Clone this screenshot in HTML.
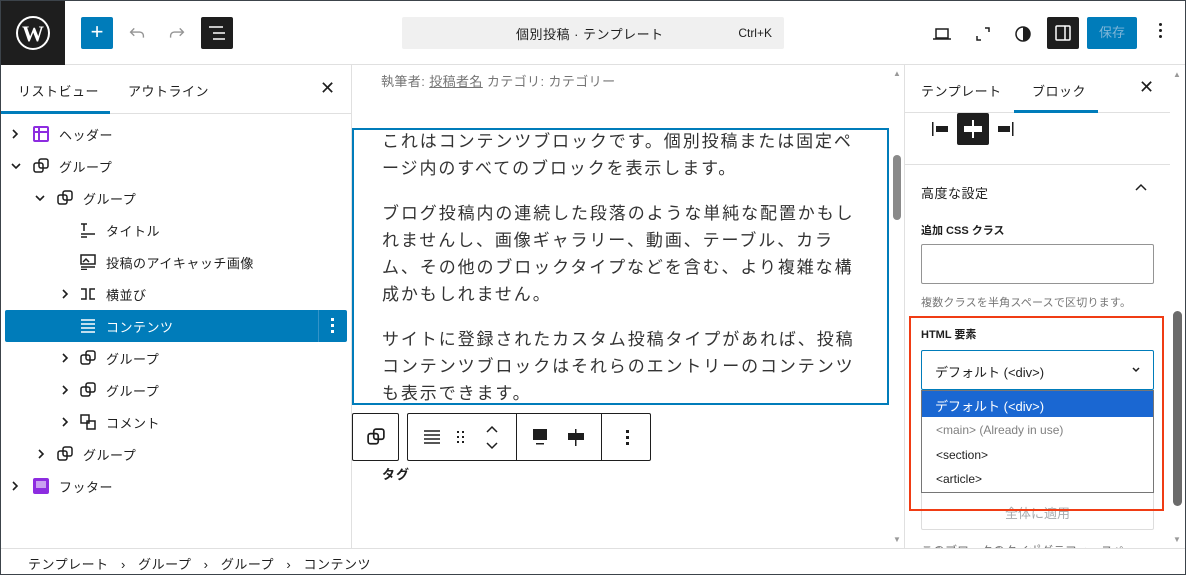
<!DOCTYPE html>
<html><head><meta charset="utf-8"><style>
*{box-sizing:border-box;margin:0;padding:0}
body{width:1186px;height:575px;overflow:hidden;background:#fff;font-family:"Liberation Sans","Noto Sans CJK JP",sans-serif;color:#1e1e1e;position:relative;font-size:13px}
.abs{position:absolute}
.frame{position:absolute;inset:0;border:1px solid #3c434a;pointer-events:none;z-index:50}
svg{display:block}
.li{position:absolute;height:32px;display:flex;align-items:center;font-size:13px;color:#1e1e1e;letter-spacing:.5px}
.chev{position:absolute}
</style></head><body>
<div class="frame"></div>
<div class="abs" style="left:0;top:0;width:1186px;height:65px;border-bottom:1px solid #e0e0e0"></div>
<div class="abs" style="left:0;top:0;width:65px;height:65px;background:#1e1e1e;display:flex;align-items:center;justify-content:center">
<svg width="36" height="36" viewBox="0 0 36 36"><circle cx="18" cy="18" r="16" fill="none" stroke="#fff" stroke-width="2"/><text x="18" y="26" text-anchor="middle" fill="#fff" font-family="Liberation Serif" font-weight="bold" font-size="22">W</text></svg></div>
<div class="abs" style="left:81px;top:17px;width:32px;height:32px;background:#007cba;border-radius:2px;color:#fff;font-size:22px;line-height:30px;text-align:center">+</div>
<svg class="abs" style="left:126px;top:22px" width="22" height="22" viewBox="0 0 24 24" fill="none" stroke="#949494" stroke-width="1.5"><path d="M9 7L5 11L9 15M5 11H15a4 4 0 0 1 4 4v2"/></svg>
<svg class="abs" style="left:166px;top:22px" width="22" height="22" viewBox="0 0 24 24" fill="none" stroke="#949494" stroke-width="1.5"><path d="M15 7L19 11L15 15M19 11H9a4 4 0 0 0-4 4v2"/></svg>
<div class="abs" style="left:201px;top:17px;width:32px;height:32px;background:#1e1e1e;border-radius:2px"><svg width="32" height="32" viewBox="0 0 32 32" stroke="#fff" stroke-width="1.5"><path d="M8 10h14M12 16h12M12 22h12"/></svg></div>
<div class="abs" style="left:402px;top:17px;width:382px;height:32px;background:#f0f0f0;border-radius:2px;font-size:13px"><span class="abs" style="left:114px;top:7px;letter-spacing:.5px">個別投稿 · テンプレート</span><span class="abs" style="right:12px;top:9px;font-size:12px">Ctrl+K</span></div>
<svg class="abs" style="left:930px;top:22px" width="24" height="24" viewBox="0 0 24 24" fill="none" stroke="#1e1e1e" stroke-width="1.5"><path d="M6 7h12v9H6zM3 17h18"/></svg>
<svg class="abs" style="left:971px;top:22px" width="24" height="24" viewBox="0 0 24 24" fill="none" stroke="#1e1e1e" stroke-width="1.5"><path d="M14 6h4v4M10 18H6v-4"/></svg>
<svg class="abs" style="left:1011px;top:22px" width="24" height="24" viewBox="0 0 24 24"><circle cx="12" cy="12" r="7" fill="none" stroke="#1e1e1e" stroke-width="1.5"/><path d="M12 5a7 7 0 0 1 0 14z" fill="#1e1e1e"/></svg>
<div class="abs" style="left:1047px;top:17px;width:32px;height:32px;background:#1e1e1e;border-radius:2px"><svg width="32" height="32" viewBox="0 0 32 32" fill="none" stroke="#fff" stroke-width="1.5"><rect x="9" y="9" width="14" height="14" rx="1"/><path d="M18 9v14"/></svg></div>
<div class="abs" style="left:1087px;top:17px;width:50px;height:32px;background:#007cba;border-radius:2px;color:#7fb6d8;font-size:13px;line-height:32px;text-align:center">保存</div>
<div class="abs" style="left:1159px;top:23px;width:3px;height:20px"><div style="width:3px;height:3px;background:#1e1e1e;border-radius:50%;margin-bottom:3px"></div><div style="width:3px;height:3px;background:#1e1e1e;border-radius:50%;margin-bottom:3px"></div><div style="width:3px;height:3px;background:#1e1e1e;border-radius:50%"></div></div>

<div class="abs" style="left:351px;top:65px;width:1px;height:484px;background:#e0e0e0"></div>
<div class="abs" style="left:0;top:113px;width:351px;height:1px;background:#e0e0e0"></div>
<div class="abs" style="left:0;top:111px;width:110px;height:3px;background:#007cba"></div>
<div class="abs" style="left:18px;top:81px;letter-spacing:.5px">リストビュー</div>
<div class="abs" style="left:128px;top:81px;letter-spacing:.5px">アウトライン</div>
<div class="abs" style="left:320px;top:78px;font-size:18px">✕</div>

<div class="li" style="left:33px;top:118px"><span style="width:16px;height:16px;border:2px solid #8d2ce0;margin-right:10px;background:linear-gradient(#8d2ce0,#8d2ce0) 0 3px/100% 2px no-repeat,linear-gradient(#8d2ce0,#8d2ce0) 3px 0/2px 100% no-repeat;border-radius:2px"></span>ヘッダー</div>
<svg class="chev" style="left:11px;top:129px" width="8" height="10" viewBox="0 0 8 10" fill="none" stroke="#1e1e1e" stroke-width="1.6"><path d="M2 1l4 4-4 4"/></svg>
<div class="li" style="left:33px;top:150px"><svg width="16" height="16" viewBox="0 0 16 16" fill="none" stroke="#1e1e1e" stroke-width="1.5" style="margin-right:10px"><rect x="1" y="5" width="9" height="9" rx="2"/><rect x="6" y="1" width="9" height="9" rx="2"/></svg>グループ</div>
<svg class="chev" style="left:11px;top:162px" width="10" height="8" viewBox="0 0 10 8" fill="none" stroke="#1e1e1e" stroke-width="1.6"><path d="M1 2l4 4 4-4"/></svg>
<div class="li" style="left:57px;top:182px"><svg width="16" height="16" viewBox="0 0 16 16" fill="none" stroke="#1e1e1e" stroke-width="1.5" style="margin-right:10px"><rect x="1" y="5" width="9" height="9" rx="2"/><rect x="6" y="1" width="9" height="9" rx="2"/></svg>グループ</div>
<svg class="chev" style="left:35px;top:194px" width="10" height="8" viewBox="0 0 10 8" fill="none" stroke="#1e1e1e" stroke-width="1.6"><path d="M1 2l4 4 4-4"/></svg>
<div class="li" style="left:80px;top:214px"><svg width="16" height="16" viewBox="0 0 16 16" fill="none" stroke="#1e1e1e" stroke-width="1.5" style="margin-right:10px"><path d="M1 2h6M4 2v7M1 12h14M1 15h6"/></svg>タイトル</div>
<div class="li" style="left:80px;top:246px"><svg width="16" height="16" viewBox="0 0 16 16" fill="none" stroke="#1e1e1e" stroke-width="1.5" style="margin-right:10px"><rect x="1" y="1" width="14" height="9"/><path d="M3 8l3-3 3 3M1 13h14M1 15.5h6"/></svg>投稿のアイキャッチ画像</div>
<div class="li" style="left:80px;top:278px"><svg width="16" height="16" viewBox="0 0 16 16" fill="none" stroke="#1e1e1e" stroke-width="1.5" style="margin-right:10px"><path d="M1 3h5v10H1M15 3h-5v10h5"/></svg>横並び</div>
<svg class="chev" style="left:61px;top:289px" width="8" height="10" viewBox="0 0 8 10" fill="none" stroke="#1e1e1e" stroke-width="1.6"><path d="M2 1l4 4-4 4"/></svg>
<div class="abs" style="left:5px;top:310px;width:342px;height:32px;background:#007cba;border-radius:2px"></div>
<div class="abs" style="left:318px;top:310px;width:1px;height:32px;background:#3393c8"></div>
<div class="abs" style="left:331px;top:318px;width:3px"><div style="width:3px;height:3px;background:#fff;margin-bottom:3px"></div><div style="width:3px;height:3px;background:#fff;margin-bottom:3px"></div><div style="width:3px;height:3px;background:#fff"></div></div>
<div class="li" style="left:80px;top:310px;color:#fff"><svg width="16" height="16" viewBox="0 0 16 16" fill="none" stroke="#fff" stroke-width="1.5" style="margin-right:10px"><path d="M1 2h14M1 6h14M1 10h14M1 14h14"/></svg>コンテンツ</div>
<div class="li" style="left:80px;top:342px"><svg width="16" height="16" viewBox="0 0 16 16" fill="none" stroke="#1e1e1e" stroke-width="1.5" style="margin-right:10px"><rect x="1" y="5" width="9" height="9" rx="2"/><rect x="6" y="1" width="9" height="9" rx="2"/></svg>グループ</div>
<svg class="chev" style="left:61px;top:353px" width="8" height="10" viewBox="0 0 8 10" fill="none" stroke="#1e1e1e" stroke-width="1.6"><path d="M2 1l4 4-4 4"/></svg>
<div class="li" style="left:80px;top:374px"><svg width="16" height="16" viewBox="0 0 16 16" fill="none" stroke="#1e1e1e" stroke-width="1.5" style="margin-right:10px"><rect x="1" y="5" width="9" height="9" rx="2"/><rect x="6" y="1" width="9" height="9" rx="2"/></svg>グループ</div>
<svg class="chev" style="left:61px;top:385px" width="8" height="10" viewBox="0 0 8 10" fill="none" stroke="#1e1e1e" stroke-width="1.6"><path d="M2 1l4 4-4 4"/></svg>
<div class="li" style="left:80px;top:406px"><svg width="16" height="16" viewBox="0 0 16 16" fill="none" stroke="#1e1e1e" stroke-width="1.5" style="margin-right:10px"><rect x="1" y="1" width="8" height="8"/><rect x="7" y="7" width="8" height="8"/></svg>コメント</div>
<svg class="chev" style="left:61px;top:417px" width="8" height="10" viewBox="0 0 8 10" fill="none" stroke="#1e1e1e" stroke-width="1.6"><path d="M2 1l4 4-4 4"/></svg>
<div class="li" style="left:57px;top:438px"><svg width="16" height="16" viewBox="0 0 16 16" fill="none" stroke="#1e1e1e" stroke-width="1.5" style="margin-right:10px"><rect x="1" y="5" width="9" height="9" rx="2"/><rect x="6" y="1" width="9" height="9" rx="2"/></svg>グループ</div>
<svg class="chev" style="left:37px;top:449px" width="8" height="10" viewBox="0 0 8 10" fill="none" stroke="#1e1e1e" stroke-width="1.6"><path d="M2 1l4 4-4 4"/></svg>
<div class="li" style="left:33px;top:470px"><span style="width:16px;height:16px;background:#8d2ce0;margin-right:10px;border-radius:2px;position:relative"><span style="position:absolute;left:3px;top:3px;width:10px;height:7px;background:#c9a0f0"></span></span>フッター</div>
<svg class="chev" style="left:11px;top:481px" width="8" height="10" viewBox="0 0 8 10" fill="none" stroke="#1e1e1e" stroke-width="1.6"><path d="M2 1l4 4-4 4"/></svg>

<div class="abs" style="left:381px;top:71px;color:#757575;font-size:13px;letter-spacing:.4px">執筆者: <u>投稿者名</u> カテゴリ: カテゴリー</div>
<div class="abs" style="left:352px;top:128px;width:537px;height:277px;border:2px solid #007cba"></div>
<div class="abs" style="left:382px;top:128px;width:480px;font-size:17px;line-height:27px;color:#333;letter-spacing:1.9px">
<p style="margin-bottom:18px">これはコンテンツブロックです。個別投稿または固定ページ内のすべてのブロックを表示します。</p>
<p style="margin-bottom:18px">ブログ投稿内の連続した段落のような単純な配置かもしれませんし、画像ギャラリー、動画、テーブル、カラム、その他のブロックタイプなどを含む、より複雑な構成かもしれません。</p>
<p>サイトに登録されたカスタム投稿タイプがあれば、投稿コンテンツブロックはそれらのエントリーのコンテンツも表示できます。</p></div>
<div class="abs" style="left:352px;top:413px;width:47px;height:48px;border:1px solid #1e1e1e;border-radius:2px;background:#fff"><svg style="margin:14px" width="18" height="18" viewBox="0 0 16 16" fill="none" stroke="#1e1e1e" stroke-width="1.5"><rect x="1" y="5" width="9" height="9" rx="2"/><rect x="6" y="1" width="9" height="9" rx="2"/></svg></div>
<div class="abs" style="left:407px;top:413px;width:244px;height:48px;border:1px solid #1e1e1e;border-radius:2px;background:#fff">
<div class="abs" style="left:108px;top:0;width:1px;height:46px;background:#1e1e1e"></div>
<div class="abs" style="left:193px;top:0;width:1px;height:46px;background:#1e1e1e"></div>
<svg class="abs" style="left:15px;top:15px" width="18" height="16" viewBox="0 0 18 16" stroke="#1e1e1e" stroke-width="1.5"><path d="M1 2h16M1 6h16M1 10h16M1 14h16"/></svg>
<svg class="abs" style="left:48px;top:15px" width="10" height="16" viewBox="0 0 10 16" fill="#1e1e1e"><rect x="1" y="2" width="2" height="2"/><rect x="6" y="2" width="2" height="2"/><rect x="1" y="7" width="2" height="2"/><rect x="6" y="7" width="2" height="2"/><rect x="1" y="12" width="2" height="2"/><rect x="6" y="12" width="2" height="2"/></svg>
<svg class="abs" style="left:76px;top:11px" width="16" height="26" viewBox="0 0 16 26" fill="none" stroke="#1e1e1e" stroke-width="1.5"><path d="M3 7l5-5 5 5M3 18l5 5 5-5"/></svg>
<svg class="abs" style="left:124px;top:14px" width="18" height="20" viewBox="0 0 18 20"><rect x="1" y="1" width="14" height="11" fill="#1e1e1e"/><rect x="4" y="15" width="8" height="1.5" fill="#1e1e1e"/></svg>
<svg class="abs" style="left:159px;top:14px" width="18" height="20" viewBox="0 0 18 20"><rect x="1" y="5" width="16" height="7" fill="#1e1e1e"/><rect x="8" y="1" width="1.5" height="17" fill="#1e1e1e"/></svg>
<div class="abs" style="left:218px;top:16px;width:3px"><div style="width:3px;height:3px;background:#1e1e1e;margin-bottom:3px"></div><div style="width:3px;height:3px;background:#1e1e1e;margin-bottom:3px"></div><div style="width:3px;height:3px;background:#1e1e1e"></div></div>
</div>
<div class="abs" style="left:382px;top:464px;font-weight:bold;font-size:13px;letter-spacing:1px">タグ</div>
<div class="abs" style="left:890px;top:65px;width:14px;height:484px;background:#fff"></div>
<div class="abs" style="left:893px;top:155px;width:8px;height:65px;background:#8a8a8a;border-radius:4px"></div>
<div class="abs" style="left:893px;top:69px;font-size:8px;color:#999">▲</div>
<div class="abs" style="left:893px;top:535px;font-size:8px;color:#999">▼</div>
<div class="abs" style="left:904px;top:65px;width:1px;height:484px;background:#e0e0e0"></div>

<div class="abs" style="left:905px;top:112px;width:265px;height:1px;background:#e0e0e0"></div>
<div class="abs" style="left:1014px;top:110px;width:84px;height:3px;background:#007cba"></div>
<div class="abs" style="left:921px;top:81px;letter-spacing:.5px">テンプレート</div>
<div class="abs" style="left:1032px;top:81px;letter-spacing:.5px">ブロック</div>
<div class="abs" style="left:1139px;top:77px;font-size:18px">✕</div>
<svg class="abs" style="left:931px;top:119px" width="20" height="20" viewBox="0 0 20 20"><rect x="1" y="3" width="1.5" height="14" fill="#1e1e1e"/><rect x="5" y="7" width="12" height="6" fill="#1e1e1e"/></svg>
<div class="abs" style="left:957px;top:113px;width:32px;height:32px;background:#1e1e1e;border-radius:2px"><svg width="32" height="32" viewBox="0 0 32 32"><rect x="7" y="13" width="18" height="6" fill="#fff"/><rect x="15" y="7" width="2" height="18" fill="#fff"/></svg></div>
<svg class="abs" style="left:995px;top:119px" width="20" height="20" viewBox="0 0 20 20"><rect x="17" y="3" width="1.5" height="14" fill="#1e1e1e"/><rect x="3" y="7" width="12" height="6" fill="#1e1e1e"/></svg>
<div class="abs" style="left:905px;top:164px;width:265px;height:1px;background:#e0e0e0"></div>
<div class="abs" style="left:921px;top:183px;font-size:13px;letter-spacing:.5px">高度な設定</div>
<svg class="abs" style="left:1134px;top:183px" width="14" height="10" viewBox="0 0 14 10" fill="none" stroke="#1e1e1e" stroke-width="1.5"><path d="M2 7l5-5 5 5"/></svg>
<div class="abs" style="left:921px;top:222px;font-size:11px;font-weight:bold">追加 CSS クラス</div>
<div class="abs" style="left:921px;top:244px;width:233px;height:40px;border:1px solid #949494;border-radius:2px"></div>
<div class="abs" style="left:921px;top:294px;font-size:11px;color:#757575;letter-spacing:.2px">複数クラスを半角スペースで区切ります。</div>
<div class="abs" style="left:921px;top:326px;font-size:11px;font-weight:bold">HTML 要素</div>
<div class="abs" style="left:921px;top:350px;width:233px;height:40px;border:1px solid #007cba;border-radius:2px;font-size:13px;padding:11px 0 0 13px">デフォルト (&lt;div&gt;)</div>
<svg class="abs" style="left:1131px;top:366px" width="10" height="8" viewBox="0 0 10 8" fill="none" stroke="#1e1e1e" stroke-width="1.5"><path d="M2 2l3 3 3-3"/></svg>
<div class="abs" style="left:921px;top:482px;width:233px;height:48px;border:1px solid #ddd;border-radius:2px;text-align:center;padding-top:20px;color:#a7aaad;font-size:13px">全体に適用</div>
<div class="abs" style="left:921px;top:390px;width:233px;height:103px;border:1px solid #767676;background:#fff;font-size:12px">
<div style="height:26px;background:#1a67d2;color:#fff;padding:5px 0 0 13px;font-size:13px">デフォルト (&lt;div&gt;)</div>
<div style="height:25px;padding:6px 0 0 14px;color:#808080">&lt;main&gt; (Already in use)</div>
<div style="height:25px;padding:6px 0 0 14px">&lt;section&gt;</div>
<div style="height:25px;padding:5px 0 0 14px">&lt;article&gt;</div></div>
<div class="abs" style="left:909px;top:316px;width:255px;height:195px;border:2px solid #f03c14"></div>
<div class="abs" style="left:921px;top:542px;font-size:12px;color:#757575">このブロックのタイポグラフィ、スペー</div>
<div class="abs" style="left:1170px;top:65px;width:16px;height:484px;background:#fff"></div>
<div class="abs" style="left:1173px;top:311px;width:9px;height:195px;background:#6b6b6b;border-radius:5px"></div>
<div class="abs" style="left:1173px;top:70px;font-size:8px;color:#999">▲</div>
<div class="abs" style="left:1173px;top:535px;font-size:8px;color:#999">▼</div>

<div class="abs" style="left:0;top:548px;width:1186px;height:27px;border-top:1px solid #e0e0e0;background:#fff;font-size:13px;padding:5px 0 0 28px;letter-spacing:.5px;white-space:pre">テンプレート   ›   グループ   ›   グループ   ›   コンテンツ</div>
</body></html>
